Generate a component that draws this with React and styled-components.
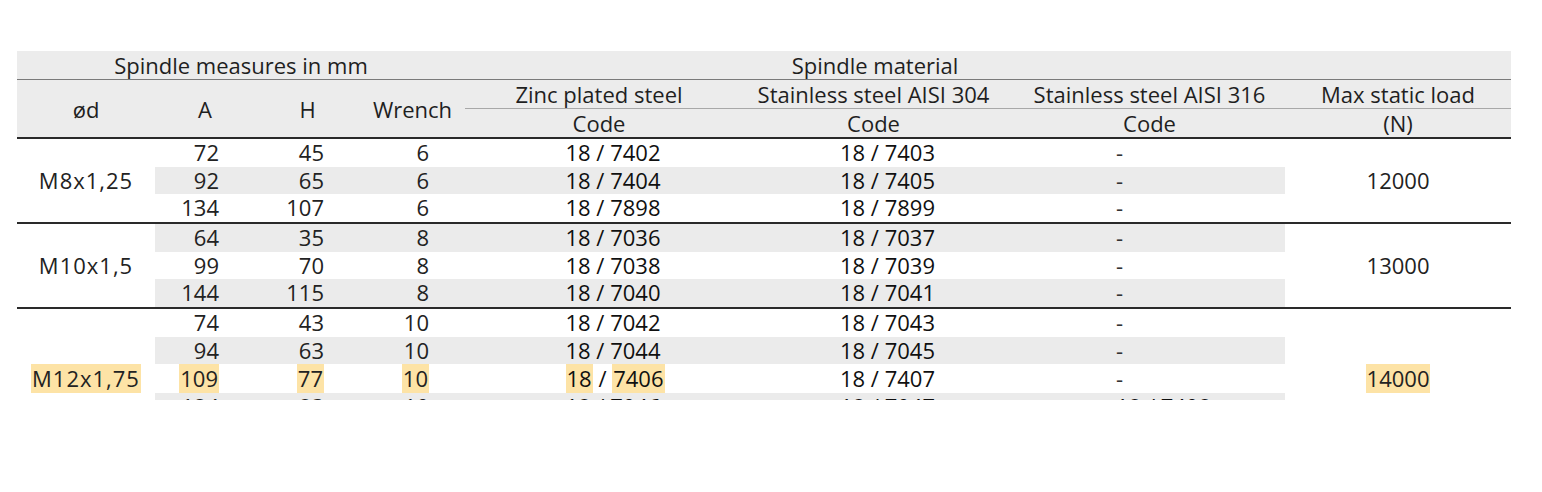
import React from 'react';
import styled, { createGlobalStyle } from 'styled-components';

const GlobalStyle = createGlobalStyle`
  html, body {
    margin: 0;
    background: #ffffff;
  }

  body {
    font-family: 'Open Sans', 'Noto Sans', sans-serif;
    color: #222222;
  }
`;

const Frame = styled.div`
  padding: 51px 31px 0 17px;
`;

// the source is a crop: the last group runs on below the picture
const Clip = styled.div`
  width: 1494px;
  height: 349px;
  overflow: hidden;
`;

const Table = styled.table`
  width: 1494px;
  table-layout: fixed;
  border-collapse: separate;
  border-spacing: 0;
  font-size: 22px;
`;

const Col = styled.col`
  width: ${props => props.$w}px;
`;

const rules = {
  thin: '1px solid #7a7a7a',
  light: '1px solid #a8a8a8',
  thick: '2px solid #2a2a2a'
};

const HeadCell = styled.th`
  padding: 0;
  font-weight: 400;
  line-height: 28px;
  text-align: center;
  vertical-align: middle;
  white-space: nowrap;
  color: #1f1f1f;
  background: #ececec;
  border-bottom: ${props => (props.$rule ? rules[props.$rule] : 'none')};
`;

const Cell = styled.td`
  padding: 0;
  line-height: 27.67px;
  text-align: center;
  vertical-align: middle;
  white-space: nowrap;
  color: #222222;
  background: ${props => (props.$shade ? '#ebebeb' : '#ffffff')};
  border-top: ${props => (props.$split ? rules.thick : 'none')};
`;

const SizeCell = styled(Cell)`
  letter-spacing: 1px;
`;

const NumCell = styled(Cell)`
  text-align: right;
  padding-right: 36px;
`;

const CodeCell = styled(Cell)`
  padding-left: 28px;
  color: #101010;
`;

const Code = styled.span`
  display: inline-block;
  width: 95px;
  text-align: left;
`;

const Dash = styled.span`
  color: #333333;
`;

const Mark = styled.span`
  display: inline-block;
  line-height: 29px;
  padding: 0 1px;
  background: #fde3a6;
`;

const groups = [
  {
    size: 'M8x1,25',
    load: '12000',
    rows: [
      ['72', '45', '6', '18 / 7402', '18 / 7403', '-'],
      ['92', '65', '6', '18 / 7404', '18 / 7405', '-'],
      ['134', '107', '6', '18 / 7898', '18 / 7899', '-']
    ]
  },
  {
    size: 'M10x1,5',
    load: '13000',
    rows: [
      ['64', '35', '8', '18 / 7036', '18 / 7037', '-'],
      ['99', '70', '8', '18 / 7038', '18 / 7039', '-'],
      ['144', '115', '8', '18 / 7040', '18 / 7041', '-']
    ]
  },
  {
    size: 'M12x1,75',
    load: '14000',
    marked: 2,
    rows: [
      ['74', '43', '10', '18 / 7042', '18 / 7043', '-'],
      ['94', '63', '10', '18 / 7044', '18 / 7045', '-'],
      ['109', '77', '10', '18 / 7406', '18 / 7407', '-'],
      ['124', '83', '10', '18 / 7046', '18 / 7047', '18 / 7408'],
      ['144', '103', '10', '18 / 7048', '18 / 7049', '-']
    ]
  }
];

const widths = [138, 100, 105, 105, 268, 281, 271, 226];

const markCode = code => {
  const [left, right] = code.split(' / ');
  return (
    <>
      <Mark>{left}</Mark> / <Mark>{right}</Mark>
    </>
  );
};

const App = () => {
  let rowIndex = 0;

  return (
    <Frame>
      <GlobalStyle />
      <Clip>
        <Table>
          <colgroup>
            {widths.map((w, i) => (
              <Col key={i} $w={w} />
            ))}
          </colgroup>
          <thead>
            <tr>
              <HeadCell colSpan={4} $rule="thin">Spindle measures in mm</HeadCell>
              <HeadCell colSpan={3} $rule="thin">Spindle material</HeadCell>
              <HeadCell $rule="thin" />
            </tr>
            <tr>
              <HeadCell rowSpan={2} $rule="thick">ød</HeadCell>
              <HeadCell rowSpan={2} $rule="thick">A</HeadCell>
              <HeadCell rowSpan={2} $rule="thick">H</HeadCell>
              <HeadCell rowSpan={2} $rule="thick">Wrench</HeadCell>
              <HeadCell $rule="light">Zinc plated steel</HeadCell>
              <HeadCell $rule="light">Stainless steel AISI 304</HeadCell>
              <HeadCell $rule="light">Stainless steel AISI 316</HeadCell>
              <HeadCell $rule="light">Max static load</HeadCell>
            </tr>
            <tr>
              <HeadCell $rule="thick">Code</HeadCell>
              <HeadCell $rule="thick">Code</HeadCell>
              <HeadCell $rule="thick">Code</HeadCell>
              <HeadCell $rule="thick">(N)</HeadCell>
            </tr>
          </thead>
          <tbody>
            {groups.map((group, g) =>
              group.rows.map((row, r) => {
                rowIndex += 1;
                const shade = rowIndex % 2 === 0;
                const split = g > 0 && r === 0;
                const hit = group.marked === r;
                const [a, h, wrench, zinc, aisi304, aisi316] = row;
                const show = v => (hit ? <Mark>{v}</Mark> : v);
                const marked = group.marked !== undefined;

                return (
                  <tr key={`${g}-${r}`}>
                    {r === 0 && (
                      <SizeCell rowSpan={group.rows.length} $split={split}>
                        {marked ? <Mark>{group.size}</Mark> : group.size}
                      </SizeCell>
                    )}
                    <NumCell $shade={shade} $split={split}>{show(a)}</NumCell>
                    <NumCell $shade={shade} $split={split}>{show(h)}</NumCell>
                    <NumCell $shade={shade} $split={split}>{show(wrench)}</NumCell>
                    <CodeCell $shade={shade} $split={split}>
                      <Code>{hit ? markCode(zinc) : zinc}</Code>
                    </CodeCell>
                    <CodeCell $shade={shade} $split={split}>
                      <Code>{aisi304}</Code>
                    </CodeCell>
                    <CodeCell $shade={shade} $split={split}>
                      <Code>{aisi316 === '-' ? <Dash>-</Dash> : aisi316}</Code>
                    </CodeCell>
                    {r === 0 && (
                      <Cell rowSpan={group.rows.length} $split={split}>
                        {marked ? <Mark>{group.load}</Mark> : group.load}
                      </Cell>
                    )}
                  </tr>
                );
              })
            )}
          </tbody>
        </Table>
      </Clip>
    </Frame>
  );
};

export default App;
